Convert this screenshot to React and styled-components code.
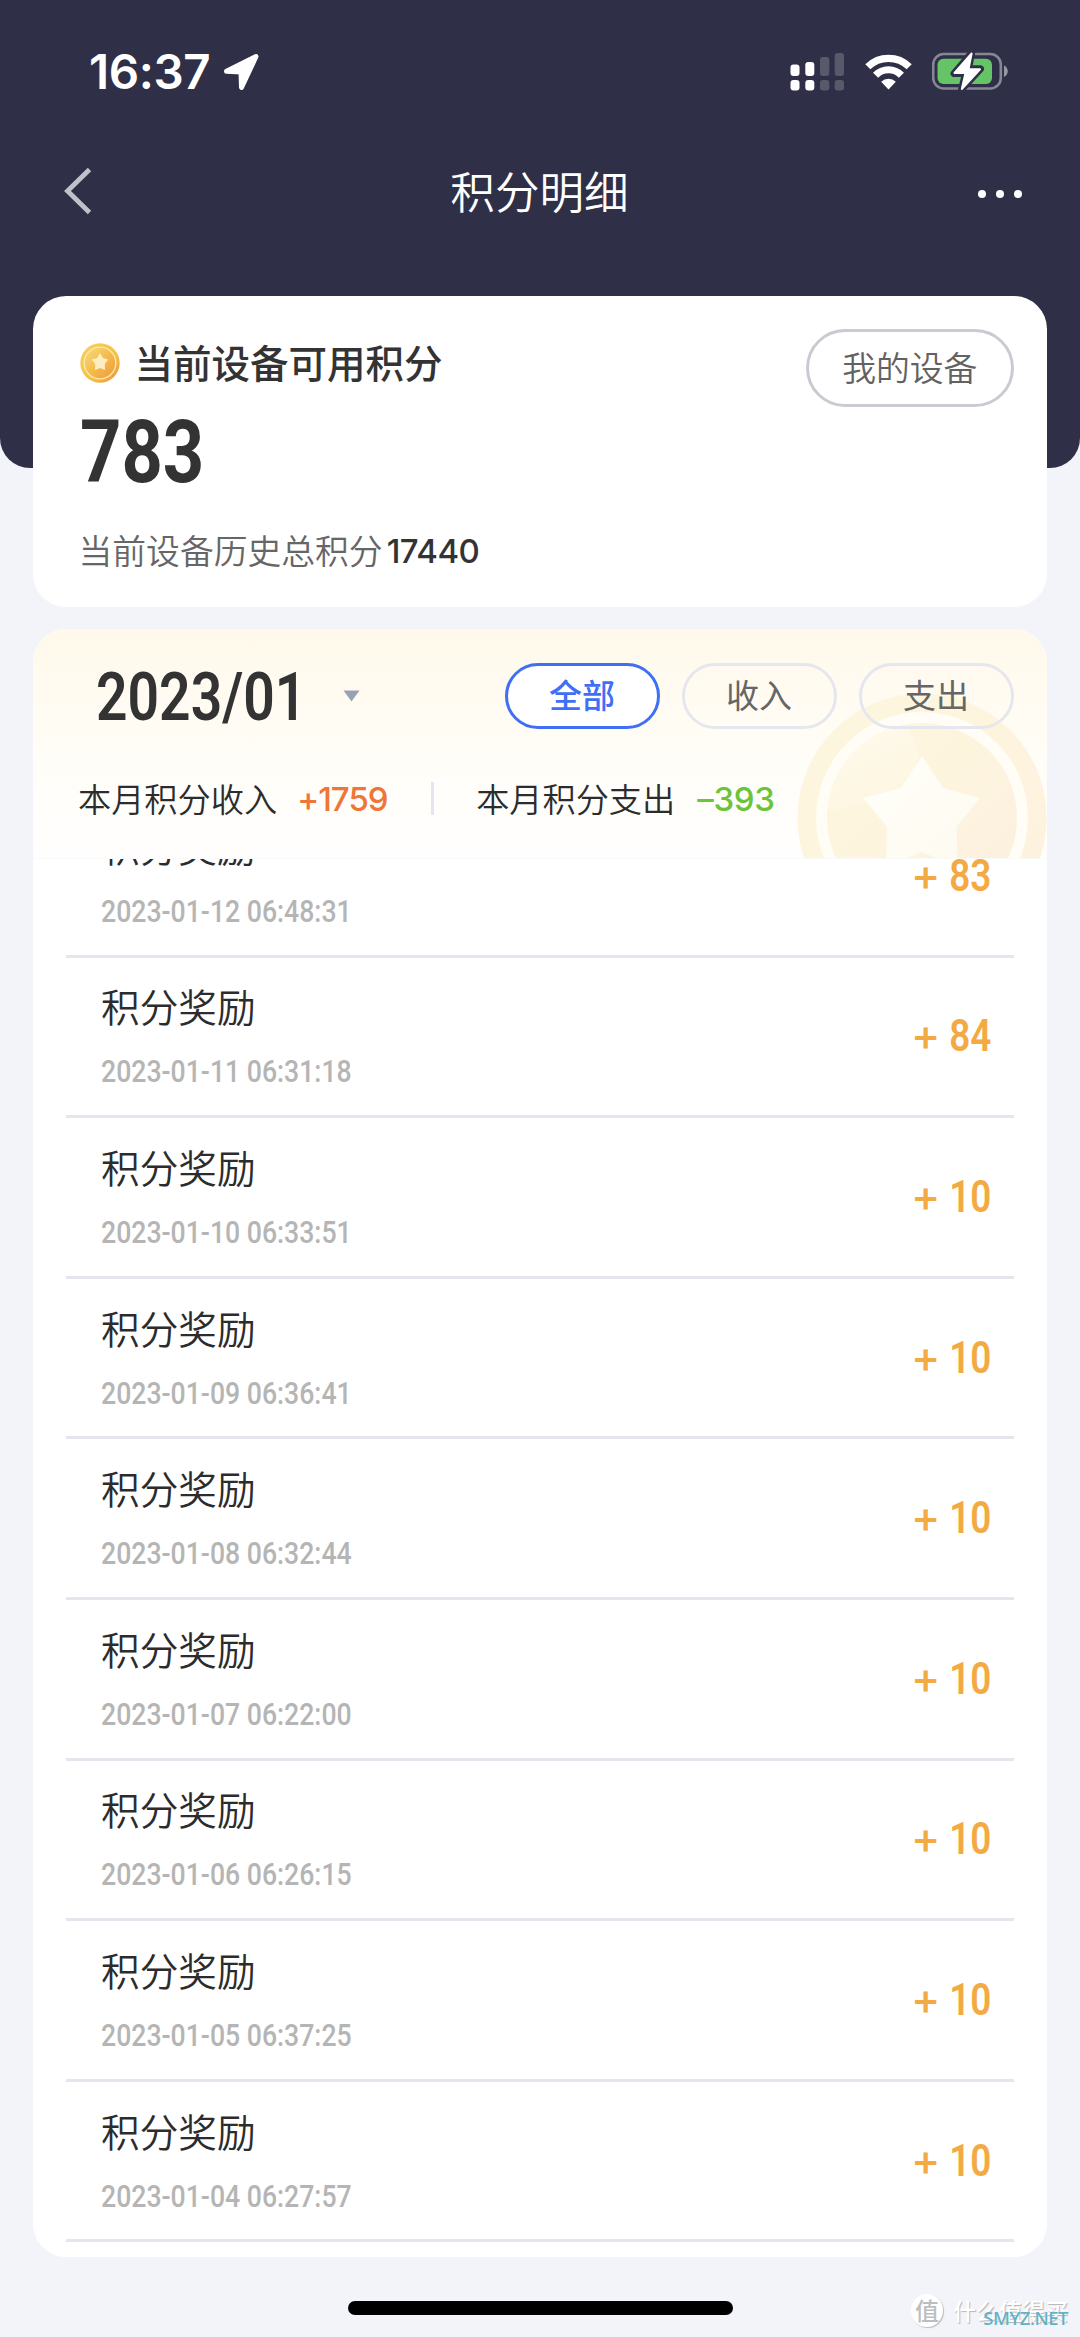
import React from "react";
import styled, { createGlobalStyle } from "styled-components";

const GlobalStyle = createGlobalStyle`
  html, body { margin: 0; padding: 0; background: #f3f4f9; }
  * { box-sizing: border-box; }
`;

const cjk = `"Noto Sans CJK SC", sans-serif`;
const latin = `Inter, "Noto Sans CJK SC", sans-serif`;
const din = `Roboto, "Noto Sans CJK SC", sans-serif`;

const Page = styled.div`
  width: 1080px;
  height: 2337px;
  overflow: hidden;
  position: relative;
  display: flex;
  flex-direction: column;
  background: #f3f4f9;
  font-family: ${cjk};
  color: #333;
`;

const Header = styled.header`
  flex: none;
  height: 468px;
  background: #2f3047;
  border-radius: 0 0 30px 30px;
`;

const StatusBar = styled.div`
  height: 143px;
  padding: 0 72px 0 89px;
  display: flex;
  align-items: center;
  justify-content: space-between;
`;

const StatusLeft = styled.div`
  display: flex;
  align-items: center;
  gap: 12px;
`;

const Clock = styled.span`
  width: 122px;
  font: 600 47.5px/48px ${latin};
  letter-spacing: -0.4px;
  color: #fff;
  white-space: nowrap;
`;

const StatusRight = styled.div`
  display: flex;
  align-items: center;
  gap: 20px;
`;

const NavBar = styled.nav`
  height: 96px;
  padding: 0 58px 0 62px;
  display: grid;
  grid-template-columns: 60px 1fr 60px;
  align-items: center;
`;

const NavTitle = styled.h1`
  margin: 0;
  padding: 0 5px 2px 0;
  text-align: center;
  font: 350 44.6px/60px ${cjk};
  color: #fff;
`;

const More = styled.div`
  display: flex;
  justify-content: flex-end;
  gap: 10px;
  padding-top: 5px;
`;

const MoreDot = styled.i`
  width: 8px;
  height: 8px;
  border-radius: 50%;
  background: #fff;
`;

const Content = styled.main`
  margin: -172px 33px 0;
  display: flex;
  flex-direction: column;
  gap: 22px;
`;

const SummaryCard = styled.section`
  height: 311px;
  border-radius: 33px;
  background: #fff;
  padding: 33px 33.5px 0 47px;
  display: flex;
  justify-content: space-between;
  align-items: flex-start;
`;

const SummaryInfo = styled.div`
  display: flex;
  flex-direction: column;
`;

const SummaryHeading = styled.div`
  display: flex;
  align-items: center;
  gap: 14.5px;
  height: 68px;
  font: 500 38.5px/56px ${cjk};
`;

const HeadingLabel = styled.span`
  padding-bottom: 5px;
`;

const Squeezed = styled.span`
  display: inline-block;
  transform: scaleX(${(p) => p.$x});
  transform-origin: ${(p) => p.$origin || "left"} center;
  white-space: nowrap;
`;

const Points = styled.div`
  height: 110px;
  font: 700 88px/110px ${din};
`;

const History = styled.div`
  margin: 18px 0 0 -1.5px;
  display: flex;
  align-items: center;
  height: 50px;
  gap: 4px;
  font: 350 33.8px/50px ${cjk};
  color: #666;
`;

const HistoryValue = styled.span`
  padding-top: 1px;
  font: 500 33px/50px ${latin};
  letter-spacing: -0.5px;
  color: #333;
`;

const DeviceButton = styled.button`
  width: 207.5px;
  height: 78px;
  padding: 0 0 3px;
  border: 3px solid #cacbd2;
  border-radius: 39px;
  background: #fff;
  font: 350 33.8px/50px ${cjk};
  color: #626262;
`;

const ListCard = styled.section`
  height: 1628px;
  border-radius: 33px;
  background: #fff;
  overflow: hidden;
  display: flex;
  flex-direction: column;
`;

const ListHeader = styled.div`
  flex: none;
  position: relative;
  height: 230px;
  padding: 34px 33.5px 0 45px;
  background: linear-gradient(180deg, #fff9eb 0%, #fffcf4 40%, #fffefb 75%, #fffefe 100%);
  border-bottom: 1px solid #fafafa;
  overflow: hidden;
`;

const CoinBackdrop = styled.div`
  position: absolute;
  right: 0;
  bottom: 0;
  width: 250px;
  height: 165px;
  svg { display: block; }
`;

const FilterRow = styled.div`
  position: relative;
  display: flex;
  align-items: center;
  justify-content: space-between;
  height: 66px;
`;

const MonthPicker = styled.div`
  display: flex;
  align-items: center;
  padding-left: 18px;
`;

const Month = styled.div`
  width: 247px;
  padding-top: 1px;
  font: 600 67.5px/66px ${din};
`;

const Chips = styled.div`
  display: flex;
  gap: 22px;
`;

const Chip = styled.button`
  width: 155px;
  height: 66px;
  padding: 0 0 5px;
  border-radius: 33px;
  border: 3px solid ${(p) => (p.$active ? "#3f6ff5" : "#e6e7ee")};
  background: ${(p) => (p.$active ? "#fff" : "transparent")};
  color: ${(p) => (p.$active ? "#3f6ff5" : "#666")};
  font: ${(p) => (p.$active ? 500 : 400)} 33px/48px ${cjk};
`;

const Totals = styled.div`
  position: relative;
  display: flex;
  align-items: center;
  height: 48px;
  margin-top: 45px;
  font: 350 33.2px/48px ${cjk};
  color: #2c2c2c;
`;

const TotalValue = styled.span`
  width: ${(p) => p.$w}px;
  margin-left: ${(p) => p.$gap}px;
  padding-top: 1px;
  font: 500 33px/48px ${latin};
  letter-spacing: ${(p) => p.$tracking}px;
  color: ${(p) => p.$color};
  white-space: nowrap;
`;

const TotalDivider = styled.i`
  width: 3px;
  height: 33px;
  margin: 0 42px;
  background: #e4e6ed;
`;

const Records = styled.div`
  flex: 1;
  overflow: hidden;
  padding: 0 33.5px 0 33px;
`;

const RecordList = styled.ul`
  list-style: none;
  margin: -62px 0 0;
  padding: 0;
`;

const Record = styled.li`
  height: 160.6px;
  padding: 0 22.5px 0 35px;
  border-bottom: 3px solid #e5e6ed;
  display: flex;
  justify-content: space-between;
  align-items: center;
`;

const RecordText = styled.div`
  display: flex;
  flex-direction: column;
  gap: 19px;
  padding-top: 3px;
`;

const RecordTitle = styled.div`
  font: 350 38.7px/50px ${cjk};
  color: #2c2c2c;
`;

const RecordDate = styled.time`
  font: 500 31px/46px ${din};
  color: #b5b5b5;
`;

const Amount = styled.div`
  width: 80px;
  display: flex;
  justify-content: space-between;
  align-items: baseline;
  padding-bottom: 1px;
  white-space: nowrap;
  color: #f3aa42;
`;

const Plus = styled.span`
  font: 500 44px/54px ${latin};
`;

const AmountValue = styled.span`
  width: 40px;
  display: flex;
  justify-content: flex-end;
  font: 600 45px/54px ${din};
`;

const HomeIndicator = styled.div`
  width: 385px;
  height: 14px;
  margin: 44px auto 0 348px;
  border-radius: 7px;
  background: #000;
`;

const Watermark = styled.div`
  position: absolute;
  right: 12px;
  bottom: 9px;
  display: flex;
  align-items: center;
  gap: 10px;
  font: 500 23px/36px ${cjk};
  color: #fff;
  text-shadow: 1px 1px 1px #b4b4b8;
`;

const WatermarkBadge = styled.span`
  width: 32px;
  height: 33px;
  border-radius: 50%;
  background: #fff;
  box-shadow: 1px 1px 1px #bbb;
  color: #bcbdc2;
  text-align: center;
  font: 500 24px/31px ${cjk};
  text-shadow: none;
`;

const WatermarkSite = styled.span`
  position: absolute;
  right: 0;
  bottom: -2px;
  font: 500 18.5px/24px "Noto Sans", sans-serif;
  letter-spacing: -0.5px;
  color: #62b2c5;
  text-shadow: none;
`;

const LocationIcon = () => (
  <svg width="37" height="38" viewBox="0 0 37 38">
    <path d="M33 3.5 L18.5 34.5 L18 19 L3.5 18.3 Z" fill="#fff" stroke="#fff" strokeWidth="5" strokeLinejoin="round" />
  </svg>
);

const SignalIcon = () => (
  <svg width="55" height="39" viewBox="0 0 55 39" fill="#fff">
    <rect x="0.5" y="12.5" width="9" height="11.5" rx="3" />
    <rect x="15.3" y="10" width="9" height="14" rx="3" />
    <rect x="30" y="5" width="9.3" height="19" rx="3" opacity=".2" />
    <rect x="44.7" y="1" width="9.3" height="23" rx="3" opacity=".2" />
    <rect x="0.5" y="28" width="9" height="10.5" rx="3" />
    <rect x="15.3" y="28" width="9" height="10.5" rx="3" />
    <rect x="30" y="28" width="9.3" height="10.5" rx="3" opacity=".2" />
    <rect x="44.7" y="28" width="9.3" height="10.5" rx="3" opacity=".2" />
  </svg>
);

const WifiIcon = () => (
  <svg width="47" height="36" viewBox="0 0 47 36">
    <g fill="none" stroke="#fff" strokeWidth="7.2">
      <path d="M2.8 12.8 A29.6 29.6 0 0 1 44.2 12.8" />
      <path d="M10.6 21.2 A18 18 0 0 1 36.4 21.2" />
    </g>
    <path d="M23.5 35.5 L16.2 27.8 A10.4 10.4 0 0 1 30.8 27.8 Z" fill="#fff" />
  </svg>
);

const BatteryIcon = () => (
  <svg width="76" height="39" viewBox="0 0 76 39">
    <rect x="1.2" y="2" width="67.6" height="34.5" rx="10.5" fill="none" stroke="#fff" strokeOpacity=".42" strokeWidth="2.6" />
    <path d="M72 13.5 C77 16 77 22.5 72 25 Z" fill="#fff" opacity=".5" />
    <rect x="5.5" y="6.7" width="54.5" height="25.2" rx="6" fill="#65c466" />
    <path d="M39.6 1 L22 21.5 L33.5 21.5 L29.5 37.5 L48.5 16.8 L36.5 16.8 Z" fill="#fff" stroke="#2f3047" strokeWidth="7" strokeLinejoin="round" />
    <path d="M39.6 1.5 L22.5 21 L33.5 21 L29.8 37 L48 17.3 L36.5 17.3 Z" fill="#fff" stroke="#fff" strokeWidth="2" strokeLinejoin="round" />
  </svg>
);

const BackIcon = () => (
  <svg width="32" height="50" viewBox="0 0 32 50">
    <path d="M27.5 3.5 L5.5 25 L27.5 46.5" fill="none" stroke="#c1c1c9" strokeWidth="4.8" />
  </svg>
);

const CoinIcon = () => (
  <svg width="40" height="40" viewBox="0 0 40 40">
    <defs>
      <linearGradient id="rim" x1="0" y1="0" x2="1" y2="1">
        <stop offset="0" stopColor="#f7d259" />
        <stop offset=".6" stopColor="#f5c04a" />
        <stop offset="1" stopColor="#ea8f38" />
      </linearGradient>
      <linearGradient id="face" x1="0" y1="0" x2="1" y2="1">
        <stop offset="0" stopColor="#f8dc82" />
        <stop offset=".5" stopColor="#f4bb4d" />
        <stop offset="1" stopColor="#ee9a3c" />
      </linearGradient>
    </defs>
    <circle cx="20" cy="20" r="19.7" fill="url(#rim)" />
    <circle cx="20" cy="20" r="15.8" fill="url(#face)" stroke="#fdeaa6" strokeWidth="1.3" />
    <path d="M20 10 L22.9 15 L28.3 16.5 L24.8 21 L25 27 L20 25 L15 27 L15.2 21 L11.7 16.5 L17.1 15 Z" fill="#fdedc0" />
  </svg>
);

const LargeCoin = () => (
  <svg width="250" height="165" viewBox="0 0 250 165">
    <defs>
      <linearGradient id="bigRim" x1="0" y1="0" x2="1" y2="1">
        <stop offset="0" stopColor="#fdf7df" />
        <stop offset="1" stopColor="#fdf1de" />
      </linearGradient>
      <linearGradient id="bigFace" x1="0" y1="0" x2="1" y2="1">
        <stop offset="0" stopColor="#fdf6dc" />
        <stop offset=".5" stopColor="#fdf4df" />
        <stop offset="1" stopColor="#fcefdf" />
      </linearGradient>
      <linearGradient id="sheen" x1="0" y1="0" x2="0.5" y2="1">
        <stop offset="0" stopColor="#fefaec" />
        <stop offset="1" stopColor="#fdf6e1" />
      </linearGradient>
      <linearGradient id="bigStar" x1="0" y1="0" x2="1" y2="1">
        <stop offset="0" stopColor="#fffefa" />
        <stop offset=".6" stopColor="#fefcf3" />
        <stop offset="1" stopColor="#fefaf0" />
      </linearGradient>
    </defs>
    <circle cx="125" cy="125" r="124.6" fill="url(#bigRim)" />
    <circle cx="125" cy="125" r="106" fill="#fffdf5" />
    <circle cx="125" cy="125" r="95" fill="url(#bigFace)" />
    <path d="M108 32 A95 95 0 0 0 30 118 Q112 105 121 62 Q119 45 108 32 Z" fill="url(#sheen)" />
    <path d="M125 63 L146 95 L183 105 L159.5 134 L161 174 L125 159 L89 174 L90 134 L66.5 105 L103.5 95 Z" fill="url(#bigStar)" />
  </svg>
);

const CaretIcon = () => (
  <svg width="17" height="12" viewBox="0 0 17 12">
    <path d="M0.5 0.5 H16.5 L8.5 11.5 Z" fill="#99a2b5" />
  </svg>
);

const records = [
  ["2023-01-12 06:48:31", "83"],
  ["2023-01-11 06:31:18", "84"],
  ["2023-01-10 06:33:51", "10"],
  ["2023-01-09 06:36:41", "10"],
  ["2023-01-08 06:32:44", "10"],
  ["2023-01-07 06:22:00", "10"],
  ["2023-01-06 06:26:15", "10"],
  ["2023-01-05 06:37:25", "10"],
  ["2023-01-04 06:27:57", "10"],
];

export default function App() {
  return (
    <Page>
      <GlobalStyle />
      <Header>
        <StatusBar>
          <StatusLeft>
            <Clock>16:37</Clock>
            <LocationIcon />
          </StatusLeft>
          <StatusRight>
            <SignalIcon />
            <WifiIcon />
            <BatteryIcon />
          </StatusRight>
        </StatusBar>
        <NavBar>
          <BackIcon />
          <NavTitle>积分明细</NavTitle>
          <More>
            <MoreDot />
            <MoreDot />
            <MoreDot />
          </More>
        </NavBar>
      </Header>

      <Content>
        <SummaryCard>
          <SummaryInfo>
            <SummaryHeading>
              <CoinIcon />
              <HeadingLabel>当前设备可用积分</HeadingLabel>
            </SummaryHeading>
            <Points>
              <Squeezed $x={0.82}>783</Squeezed>
            </Points>
            <History>
              当前设备历史总积分
              <HistoryValue>17440</HistoryValue>
            </History>
          </SummaryInfo>
          <DeviceButton>我的设备</DeviceButton>
        </SummaryCard>

        <ListCard>
          <ListHeader>
            <CoinBackdrop>
              <LargeCoin />
            </CoinBackdrop>
            <FilterRow>
              <MonthPicker>
                <Month>
                  <Squeezed $x={0.818}>2023/01</Squeezed>
                </Month>
                <CaretIcon />
              </MonthPicker>
              <Chips>
                <Chip $active>全部</Chip>
                <Chip>收入</Chip>
                <Chip>支出</Chip>
              </Chips>
            </FilterRow>
            <Totals>
              本月积分收入
              <TotalValue $w={92} $gap={20} $tracking={-1} $color="#ee7636">+1759</TotalValue>
              <TotalDivider />
              本月积分支出
              <TotalValue $w={80} $gap={22} $tracking={-0.3} $color="#6cc439">–393</TotalValue>
            </Totals>
          </ListHeader>
          <Records>
            <RecordList>
              {records.map(([date, points]) => (
                <Record key={date}>
                  <RecordText>
                    <RecordTitle>积分奖励</RecordTitle>
                    <RecordDate>
                      <Squeezed $x={0.859}>{date}</Squeezed>
                    </RecordDate>
                  </RecordText>
                  <Amount>
                    <Plus>+</Plus>
                    <AmountValue>
                      <Squeezed $x={0.82} $origin="right">{points}</Squeezed>
                    </AmountValue>
                  </Amount>
                </Record>
              ))}
            </RecordList>
          </Records>
        </ListCard>
      </Content>

      <HomeIndicator />
      <Watermark>
        <WatermarkBadge>值</WatermarkBadge>
        什么值得买
        <WatermarkSite>SMYZ.NET</WatermarkSite>
      </Watermark>
    </Page>
  );
}
